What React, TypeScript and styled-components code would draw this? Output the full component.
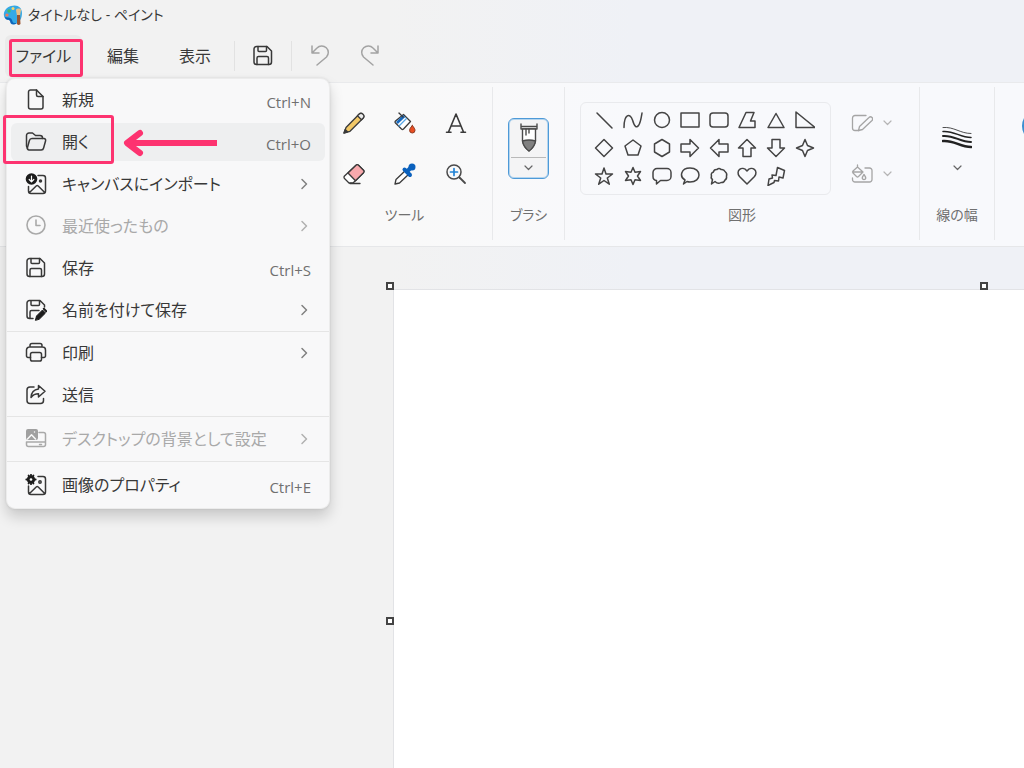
import React from 'react';
import styled, { createGlobalStyle } from 'styled-components';

const pink = '#fd3370';

const GlobalStyle = createGlobalStyle`
  * { box-sizing: border-box; }
  body {
    margin: 0;
    overflow: hidden;
    font-family: "Open Sans", "Noto Sans CJK JP", sans-serif;
    font-feature-settings: "palt";
    color: #383838;
  }
  button {
    font: inherit;
    font-feature-settings: inherit;
    color: inherit;
    border: 0;
    padding: 0;
    background: none;
  }
`;

const Window = styled.div`
  height: 100vh;
  display: flex;
  flex-direction: column;
  background: linear-gradient(90deg, #f2f2f2 38%, #eff1f6 62%);
`;

const TitleBar = styled.header`
  flex: none;
  height: 30px;
  display: flex;
  align-items: center;
  gap: 5px;
  padding-left: 3px;
`;

const Title = styled.h1`
  margin: 0;
  font-size: 14px;
  font-weight: 400;
  line-height: 20px;
`;

const MenuBar = styled.nav`
  flex: none;
  height: 52px;
  display: flex;
  align-items: center;
  padding: 0 5px;
`;

const FileMenu = styled.div`
  position: relative;
  margin-right: 5px;
`;

const MenuButton = styled.button<{ $active?: boolean }>`
  width: ${p => (p.$active ? 77 : 72)}px;
  height: 42px;
  border-radius: 6px;
  font-size: 16px;
  line-height: 24px;
  background: ${p => (p.$active ? '#eaeaea' : 'transparent')};
`;

const BarDivider = styled.span`
  width: 1px;
  height: 30px;
  margin: 0 3px;
  background: #e2e2e2;
`;

const BarIcon = styled.button`
  width: 50px;
  height: 40px;
  display: grid;
  place-items: center;
`;

const Callout = styled.span<{ $x: number; $y: number; $w: number; $h: number }>`
  position: absolute;
  left: ${p => p.$x}px;
  top: ${p => p.$y}px;
  width: ${p => p.$w}px;
  height: ${p => p.$h}px;
  border: 3px solid ${pink};
  border-radius: 3px;
  pointer-events: none;
`;

const Arrow = styled.svg`
  position: absolute;
  left: 112px;
  top: 6px;
`;

const Dropdown = styled.div`
  position: absolute;
  z-index: 2;
  left: 1px;
  top: 43px;
  width: 324px;
  border: 1px solid #ececec;
  border-radius: 9px;
  background: #f8f8f9;
  box-shadow: 0 8px 14px rgba(0, 0, 0, 0.17), 0 0 3px rgba(0, 0, 0, 0.1);
`;

const Section = styled.div<{ $pad?: number }>`
  display: flex;
  flex-direction: column;
  padding: ${p => p.$pad ?? 0}px 4px;
  & + & { border-top: 1px solid #e5e5e5; }
`;

const Item = styled.button<{ $hover?: boolean }>`
  position: relative;
  height: 38px;
  margin: 2px 0;
  padding: 0 14px;
  display: flex;
  align-items: center;
  gap: 15px;
  border-radius: 6px;
  font-size: 16px;
  line-height: 24px;
  text-align: left;
  background: ${p => (p.$hover ? '#eeeff0' : 'transparent')};
  &:disabled { color: #a9a9a9; }
`;

const ItemLabel = styled.span`
  flex: 1;
  white-space: nowrap;
`;

const Shortcut = styled.span`
  font-size: 15px;
  line-height: 20px;
  padding-top: 4px;
  color: #707070;
`;

const Ribbon = styled.section`
  flex: none;
  height: 165px;
  display: flex;
  padding: 4px 0 6px 317px;
  border-top: 1px solid #e9eaec;
  border-bottom: 1px solid #e6e7e9;
  background: linear-gradient(90deg, #f9f9f9 40%, #f8f9fc 62%);
`;

const Group = styled.div<{ $w?: number }>`
  flex: ${p => (p.$w ? 'none' : '1')};
  width: ${p => (p.$w ? p.$w + 'px' : 'auto')};
  display: flex;
  flex-direction: column;
  align-items: center;
  overflow: hidden;
  & + & { border-left: 1px solid #e8e9eb; }
`;

const GroupBody = styled.div`
  height: 118px;
  width: 100%;
  display: flex;
  align-items: center;
  justify-content: center;
  padding-top: 4px;
`;

const GroupLabel = styled.span`
  font-size: 14px;
  line-height: 20px;
  color: #707070;
`;

const ToolGrid = styled.div`
  display: grid;
  grid-template-columns: repeat(3, 51px);
  grid-auto-rows: 51px;
`;

const Tool = styled.button`
  display: grid;
  place-items: center;
`;

const BrushButton = styled.button`
  width: 41px;
  height: 61px;
  display: flex;
  flex-direction: column;
  align-items: center;
  border: 1px solid #4d9ad8;
  border-radius: 6px;
  background: #f4f4f5;
  box-shadow: inset 0 0 0 1px #b5d5ee;
`;

const BrushTop = styled.span`
  height: 39px;
  width: 35px;
  display: grid;
  place-items: center;
  border-bottom: 1px solid #b9b9b9;
`;

const BrushBottom = styled.span`
  flex: 1;
  display: grid;
  place-items: center;
`;

const ShapesBody = styled(GroupBody)`
  justify-content: flex-start;
  padding-left: 15px;
`;

const ShapePanel = styled.div`
  width: 251px;
  height: 93px;
  padding: 3px 11px 3px 9px;
  display: grid;
  grid-template-columns: repeat(8, 1fr);
  grid-auto-rows: 28px;
  border: 1px solid #e9eaed;
  border-radius: 6px;
`;

const StyleColumn = styled.div`
  display: flex;
  flex-direction: column;
  margin-left: 11px;
`;

const StyleButton = styled.button`
  width: 58px;
  height: 51px;
  display: flex;
  align-items: center;
  justify-content: center;
  gap: 10px;
`;

const StrokeButton = styled.button`
  display: flex;
  flex-direction: column;
  align-items: center;
  gap: 16px;
`;

const ColorBody = styled(GroupBody)`
  justify-content: flex-start;
  align-items: flex-start;
  padding: 22px 0 0 27px;
`;

const ColorSwatch = styled.button`
  flex: none;
  width: 34px;
  height: 34px;
  border: 2px solid #3c8fd0;
  border-radius: 50%;
  background: #3c8fd0;
`;

const Workspace = styled.main`
  flex: 1;
  min-height: 0;
  overflow: hidden;
  padding: 42px 0 0 393px;
`;

const Canvas = styled.div`
  position: relative;
  width: 1190px;
  height: 672px;
  border: 1px solid #e2e3e6;
  background: #fff;
`;

const Handle = styled.span<{ $x: string; $y: string }>`
  position: absolute;
  left: ${p => p.$x};
  top: ${p => p.$y};
  width: 8px;
  height: 8px;
  margin: -8px 0 0 -8px;
  border: 2px solid #444;
  background: #fff;
`;

type GlyphProps = { w?: number; h?: number; sw?: number; color?: string; children: React.ReactNode };
const Glyph = ({ w = 22, h = 22, sw = 1.5, color = 'currentColor', children }: GlyphProps) => (
  <svg width={w} height={h} viewBox={`0 0 ${w} ${h}`} fill="none" stroke={color} strokeWidth={sw} strokeLinecap="round" strokeLinejoin="round" aria-hidden="true">
    {children}
  </svg>
);

const ChevronRight = ({ color = '#808080' }: { color?: string }) => <Glyph w={14} h={14} sw={1.5} color={color}><path d="M5 2.500 9.500 7 5 11.500" /></Glyph>;
const ChevronDown = ({ color = '#666' }: { color?: string }) => <Glyph w={9} h={6} sw={1.2} color={color}><path d="M1 1 4.500 4.500 8 1" /></Glyph>;

const SaveGlyph = () => (
  <Glyph>
    <path d="M4.500 1.500H15L19.500 6v11a2.500 2.500 0 0 1-2.500 2.500H4.500A2.500 2.500 0 0 1 2 17V4a2.500 2.500 0 0 1 2.500-2.500Z" />
    <path d="M6 1.500v4a1 1 0 0 0 1 1h6.500a1 1 0 0 0 1-1v-4M5 19.500V13a1.500 1.500 0 0 1 1.500-1.500H15a1.500 1.500 0 0 1 1.500 1.500v6.500" />
  </Glyph>
);
const NewGlyph = () => (
  <Glyph>
    <path d="M5.500 1h6L18 7.500V18a2 2 0 0 1-2 2H5.500a2 2 0 0 1-2-2V3a2 2 0 0 1 2-2Z" />
    <path d="M11.500 1v5a1.500 1.500 0 0 0 1.500 1.500h5" />
  </Glyph>
);
const OpenGlyph = () => (
  <Glyph>
    <path d="M2.500 17.500 1.500 15V4.500A2.500 2.500 0 0 1 4 2h3.500l3 2.500H15A2.500 2.500 0 0 1 17.500 7v.5" />
    <path d="M7 7.500h12a1.700 1.700 0 0 1 1.600 2.200l-2 7.300A2.500 2.500 0 0 1 16.200 19H4a1.700 1.700 0 0 1-1.600-2.200l2-7.300A2.700 2.700 0 0 1 7 7.500Z" />
  </Glyph>
);
const ImportGlyph = () => (
  <Glyph>
    <path d="M13 2.500h5A2.500 2.500 0 0 1 20.500 5v13a2.500 2.500 0 0 1-2.500 2.500H6A2.500 2.500 0 0 1 3.500 18v-4.500M4.500 19.500l6.700-6.500a1.500 1.500 0 0 1 2 0l6.500 6.500" />
    <circle cx="15.500" cy="8" r="1" fill="currentColor" />
    <circle cx="6.500" cy="6" r="5.800" fill="#1c1c1c" stroke="none" />
    <path d="M6.500 3v5.500M4.200 6.500l2.300 2.300 2.300-2.300" stroke="#fff" strokeWidth="1.200" />
  </Glyph>
);
const ClockGlyph = () => <Glyph sw={1.6}><circle cx="11" cy="10" r="9" /><path d="M11 5v5.500h4" /></Glyph>;
const SaveAsGlyph = () => (
  <Glyph>
    <path d="M8 19.500H4.500A2.500 2.500 0 0 1 2 17V4a2.500 2.500 0 0 1 2.500-2.500H15L19.500 6v2M6 1.500v4a1 1 0 0 0 1 1h6.500a1 1 0 0 0 1-1v-4M5 19.500V13a1.500 1.500 0 0 1 1.500-1.500H14" />
    <path d="m10.500 21 1-4 6-6 3 3-6 6Z" fill="#1c1c1c" stroke="#1c1c1c" strokeWidth="1" />
    <path d="m18.800 9.700 2.500 2.500" stroke="#1c1c1c" strokeWidth="2" />
  </Glyph>
);
const PrintGlyph = () => (
  <Glyph>
    <path d="M5 5V3.500a2 2 0 0 1 2-2h8a2 2 0 0 1 2 2V5M5.500 15.500H3A1.500 1.500 0 0 1 1.500 14V8a3 3 0 0 1 3-3h13a3 3 0 0 1 3 3v6a1.500 1.500 0 0 1-1.500 1.500h-2.500" />
    <rect x="5.500" y="10.500" width="11" height="8.500" rx="1.800" />
  </Glyph>
);
const ShareGlyph = () => (
  <Glyph>
    <path d="M9 3H5a3 3 0 0 0-3 3v10.500a3 3 0 0 0 3 3h10.500a3 3 0 0 0 3-3v-2" />
    <path d="M13.500 1.500 20 7.300 13.500 13V9.700C10 9.700 8 10.700 6 13.500c.3-5 3-8 7.500-8.500V1.500Z" />
  </Glyph>
);
const DesktopGlyph = () => (
  <Glyph>
    <path d="M14 4.500h4.500a2 2 0 0 1 2 2v10a2 2 0 0 1-2 2h-15a2 2 0 0 1-2-2V14M1.500 14h19M14.500 16.500h2" />
    <rect x="1" y="1" width="12" height="11" rx="2" fill="#a0a0a0" stroke="none" />
    <path d="m2.500 11 4-4.300 4 4.300M9.500 4v.1" stroke="#f8f8f8" />
  </Glyph>
);
const PropertiesGlyph = () => (
  <Glyph>
    <path d="M13 2.500h5A2.500 2.500 0 0 1 20.500 5v13a2.500 2.500 0 0 1-2.500 2.500H6A2.500 2.500 0 0 1 3.500 18v-6M4.500 19.500l6.700-6.500a1.500 1.500 0 0 1 2 0l6.500 6.500" />
    <circle cx="15" cy="8" r="1.200" />
    <circle cx="6" cy="5.500" r="2.800" strokeWidth="2.500" stroke="#1c1c1c" />
    <path d="M6 .8v9.400M1.300 5.500h9.400M3.600 1.500l4.800 8M8.400 1.500l-4.800 8" stroke="#1c1c1c" strokeWidth="1.800" />
    <circle cx="6" cy="5.500" r="1.300" fill="#fff" stroke="none" />
  </Glyph>
);

type Entry = { label: string; icon: React.ReactNode; keys?: string; sub?: boolean; disabled?: boolean; open?: boolean };
const sections: { pad?: number; items: Entry[] }[] = [
  {
    items: [
      { label: '新規', icon: <NewGlyph />, keys: 'Ctrl+N' },
      { label: '開く', icon: <OpenGlyph />, keys: 'Ctrl+O', open: true },
      { label: 'キャンバスにインポート', icon: <ImportGlyph />, sub: true },
      { label: '最近使ったもの', icon: <ClockGlyph />, sub: true, disabled: true },
      { label: '保存', icon: <SaveGlyph />, keys: 'Ctrl+S' },
      { label: '名前を付けて保存', icon: <SaveAsGlyph />, sub: true },
    ],
  },
  { items: [{ label: '印刷', icon: <PrintGlyph />, sub: true }, { label: '送信', icon: <ShareGlyph /> }] },
  { pad: 1, items: [{ label: 'デスクトップの背景として設定', icon: <DesktopGlyph />, sub: true, disabled: true }] },
  { pad: 2, items: [{ label: '画像のプロパティ', icon: <PropertiesGlyph />, keys: 'Ctrl+E' }] },
];

const tools: [string, React.ReactNode][] = [
  ['鉛筆', <Glyph sw={1.3} color="#3a3a3a"><path d="M1 21 3 15.500 15.800 2.500a2.800 2.800 0 0 1 4 4L7 19.300Z" fill="#f2c867" /><path d="m14.500 3.800 1.500-1.500a2.600 2.600 0 0 1 4 4l-1.500 1.500Z" fill="#eee" /><path d="m1 21 1.200-3.500 2.300 2.300Z" fill="#3a3a3a" /></Glyph>],
  ['塗りつぶし', <Glyph sw={1.3} color="#3a3a3a"><path d="M9.500 2.500 16.500 9.500 9.500 17a1.500 1.500 0 0 1-2 0L1.500 11a1.500 1.500 0 0 1 0-2Z" fill="#fff" /><path d="m9 3-7 7 1.800 2 7.500-7Z" fill="#1769bd" stroke="none" /><path d="m12.500 6.500-7.500 7.500" stroke="#56a5e6" /><path d="m5 1 4 4" /><path d="M18.300 13.500c2 2.500 2.700 3.500 2.700 4.800a2.700 2.700 0 0 1-5.400 0c0-1.300.7-2.300 2.700-4.800Z" fill="#e94e22" stroke="#8c3b22" strokeWidth="1" /></Glyph>],
  ['テキスト', <Glyph sw={1.6} color="#3a3a3a"><path d="M3.500 20 11 2l7.500 18M6 14h10M1.500 20.300H6M16 20.300h4.500" /></Glyph>],
  ['消しゴム', <Glyph sw={1.3} color="#3a3a3a"><path d="M13 2.200a2 2 0 0 1 2.500 0l5 5a2 2 0 0 1 0 2.500L10 20H6l-4.500-4.500a2 2 0 0 1 0-2.500Z" fill="#fff" /><path d="M13 2.200a2 2 0 0 1 2.500 0l5 5a2 2 0 0 1 0 2.500l-8 8L5 10Z" fill="#f8a9ad" /><path d="M7 20.500h10" /></Glyph>],
  ['色の選択', <Glyph sw={1.3} color="#3a3a3a"><path d="m1 21 1-4.500L12 7l3.500 3.500-10 9.500Z" fill="#fff" /><path d="m10.500 6.500 5.500 5.500" stroke="#0b61bd" strokeWidth="4" /><path d="m13.500 8 4.500-4.500" stroke="#0b61bd" strokeWidth="4" /><circle cx="18" cy="4" r="3.500" fill="#0b61bd" stroke="none" /></Glyph>],
  ['拡大鏡', <Glyph sw={1.5} color="#4a4a4a"><circle cx="9" cy="9" r="7" /><path d="m14.500 14.500 5.500 5.500" strokeWidth="1.800" /><path d="M9 5.500v7M5.500 9h7" stroke="#2183d5" strokeWidth="1.700" /></Glyph>],
];

const shapes: [string, string][] = [
  ['直線', 'M3 3 18 18'],
  ['曲線', 'M1 17.500C1 4 7 2.500 9.500 10c2 7 4 8 6 5.500S18 9 19 3'],
  ['楕円形', 'M10 2.500a7.500 7.500 0 1 1 0 15 7.500 7.500 0 1 1 0-15Z'],
  ['四角形', 'M1 3h18v14H1Z'],
  ['角丸四角形', 'M4 3h12a3 3 0 0 1 3 3v8a3 3 0 0 1-3 3H4a3 3 0 0 1-3-3V6a3 3 0 0 1 3-3Z'],
  ['多角形', 'M9 2.500h8L13.500 11H18v6.500H2Z'],
  ['三角形', 'M10 3.500 18 17.500H2Z'],
  ['直角三角形', 'M1 2v15.500h19Z'],
  ['ひし形', 'M10 1.500 18.500 10 10 18.500 1.500 10Z'],
  ['五角形', 'M10 2 18 8l-3 9H5L2 8Z'],
  ['六角形', 'M10 1.500 17.500 6v8L10 18.500 2.500 14V6Z'],
  ['右矢印', 'M1 6h9V1.500L18.500 10 10 18.500V14H1Z'],
  ['左矢印', 'M19 6h-9V1.500L1.500 10l8.500 8.500V14h9Z'],
  ['上矢印', 'M6 18.500V10H1.500L10 1.500 18.500 10H14v8.500Z'],
  ['下矢印', 'M6 1.500V10H1.500l8.500 8.500 8.500-8.500H14V1.500Z'],
  ['四つ星', 'm10 1.500 2.500 6 6 2.500-6 2.500-2.500 6-2.500-6-6-2.500 6-2.500Z'],
  ['五つ星', 'm10 2 2 6h6.500l-5.200 4 2 6.200L10 14.500l-5.300 3.700 2-6.200-5.200-4H8Z'],
  ['六つ星', 'm10 1.500 2 4.700 5.500-.7L14.500 10l3 4.500-5.500-.7-2 4.700-2-4.700-5.500.7 3-4.500-3-4.500 5.500.7Z'],
  ['角丸吹き出し', 'M5 2.500h10a4 4 0 0 1 4 4v4a4 4 0 0 1-4 4H8.500L4.500 18v-3.500A4 4 0 0 1 1 10.500v-4a4 4 0 0 1 4-4Z'],
  ['円形吹き出し', 'M5 14C-1 10.500 1 2 10 2c12 0 12 14 0 14q-1.500 0-3-.5L3.500 18Z'],
  ['雲形吹き出し', 'M6 15.500 2.500 18l1-4.500Q1.500 12 2.500 10q-1-3 2-4Q5 3 8 3.500q2-2 4 0 3-.5 4 2 2.500 2 1.500 4.500.5 3-1.500 4-1 3-4 2.500-3 2-6-1Z'],
  ['ハート', 'M10 18 2.500 10.500C-2 5 5-1 10 5c5-6 12 0 7.500 5.500Z'],
  ['稲妻', 'M11.500 1.500 18.500 4.500 17 12l-4-1-.5 4-4-.5L8 16.500 2 19.500 3 13l3.500-1L6 9l4 .5Z'],
];

export default function App() {
  return (
    <>
      <GlobalStyle />
      <Window>
        <TitleBar>
          <svg width="20" height="22" viewBox="0 0 20 22" aria-hidden="true">
            <path d="M8 2c6-2 11 1 11 7 0 5-2 10-8 11-3 0-3-2-3-4-1-2-7 0-7-4C0 7 4 3 8 2Z" fill="#35a9e6" />
            <path d="M2 13c3 1 6 0 7 3s1 3 5 3c-4 3-7 1-7-2-1-2-5 0-5-4Z" fill="#0d66ba" />
            <circle cx="6" cy="7" r="1.700" fill="#48bd63" /><circle cx="10" cy="4.500" r="1.500" fill="#f5d66b" /><circle cx="4" cy="11" r="1.600" fill="#f27b58" />
            <path d="M13 6c0-2 5-2 5 0l-1 6h-3Z" fill="#e9bf87" /><path d="M14 11h3l.5 9q-2 2-3.500 0Z" fill="#9a5430" />
          </svg>
          <Title>タイトルなし - ペイント</Title>
        </TitleBar>
        <MenuBar>
          <FileMenu>
            <MenuButton $active aria-expanded="true">ファイル</MenuButton>
            <Callout $x={4} $y={4} $w={74} $h={38} />
            <Dropdown>
              {sections.map((s, i) => (
                <Section key={i} $pad={s.pad}>
                  {s.items.map(it => (
                    <Item key={it.label} disabled={it.disabled} $hover={it.open}>
                      {it.icon}
                      <ItemLabel>{it.label}</ItemLabel>
                      {it.keys && <Shortcut>{it.keys}</Shortcut>}
                      {it.sub && <ChevronRight color={it.disabled ? '#b0b0b0' : undefined} />}
                      {it.open && (
                        <>
                          <Callout $x={-8} $y={-8} $w={111} $h={49} />
                          <Arrow width="94" height="28" viewBox="0 0 94 28" fill="none" stroke={pink} strokeWidth="6" strokeLinejoin="round" aria-hidden="true">
                            <path d="M4 14h90" />
                            <path d="M17 4 4 14l13 10" strokeLinecap="round" />
                          </Arrow>
                        </>
                      )}
                    </Item>
                  ))}
                </Section>
              ))}
            </Dropdown>
          </FileMenu>
          <MenuButton>編集</MenuButton>
          <MenuButton>表示</MenuButton>
          <BarDivider />
          <BarIcon aria-label="保存"><SaveGlyph /></BarIcon>
          <BarDivider />
          <BarIcon aria-label="元に戻す"><Glyph w={20} color="#a3a3a3"><path d="M2 1v7h7M2 8l5-5a6.500 6.500 0 0 1 9.500 9L7 20" /></Glyph></BarIcon>
          <BarIcon aria-label="やり直し"><Glyph w={20} color="#a3a3a3"><path d="M18 1v7h-7M18 8l-5-5a6.500 6.500 0 0 0-9.500 9L13 20" /></Glyph></BarIcon>
        </MenuBar>
        <Ribbon>
          <Group $w={175}>
            <GroupBody>
              <ToolGrid>
                {tools.map(([name, icon]) => <Tool key={name} aria-label={name}>{icon}</Tool>)}
              </ToolGrid>
            </GroupBody>
            <GroupLabel>ツール</GroupLabel>
          </Group>
          <Group $w={72}>
            <GroupBody>
              <BrushButton aria-label="ブラシ">
                <BrushTop>
                  <Glyph w={18} h={30} sw={1.4} color="#4a4a4a">
                    <path d="M1 1v5h16V1M1 3.500h16" /><path d="M2.500 6h13v12q-1 6-6.500 10-5.500-4-6.500-10Z" fill="#fff" />
                    <path d="M2.500 18q6.500-2 13 0-1 6-6.500 10-5.500-4-6.500-10Z" fill="#808080" /><path d="M6 6v6M9 6v4" />
                  </Glyph>
                </BrushTop>
                <BrushBottom><ChevronDown /></BrushBottom>
              </BrushButton>
            </GroupBody>
            <GroupLabel>ブラシ</GroupLabel>
          </Group>
          <Group $w={355}>
            <ShapesBody>
              <ShapePanel>
                {shapes.map(([name, d]) => (
                  <Tool key={name} aria-label={name}><Glyph w={20} h={20} sw={1.5} color="#444"><path d={d} /></Glyph></Tool>
                ))}
              </ShapePanel>
              <StyleColumn>
                <StyleButton aria-label="輪郭">
                  <Glyph color="#a5a5a5" sw={1.3}><path d="M15 3.500H4A2.500 2.500 0 0 0 1.500 6v10A2.500 2.500 0 0 0 4 18.500h4" /><path d="m7.500 18.500 1-4 9.500-9a2 2 0 0 1 3 3l-9.500 9Z" /></Glyph>
                  <ChevronDown color="#b5b5b5" />
                </StyleButton>
                <StyleButton aria-label="図形の塗りつぶし">
                  <Glyph color="#a5a5a5" sw={1.3}><path d="M14 5h4.500A2.500 2.500 0 0 1 21 7.500v9a2.500 2.500 0 0 1-2.500 2.500H4a2.500 2.500 0 0 1-2.500-2.500V15" /><path d="m6.500 4 5.500 5-4.500 4.500a1.500 1.500 0 0 1-2 0L2 10a1.500 1.500 0 0 1 0-2ZM6.500 2v2M1.500 9H12" /><path d="M13 11.500c3 4 1.500 5 0 5s-3-1 0-5Z" /></Glyph>
                  <ChevronDown color="#b5b5b5" />
                </StyleButton>
              </StyleColumn>
            </ShapesBody>
            <GroupLabel>図形</GroupLabel>
          </Group>
          <Group $w={75}>
            <GroupBody>
              <StrokeButton aria-label="線の幅">
                <Glyph w={30} h={24} color="#222">
                  <path d="M1 2.500c11-1 17 6 28 6" strokeWidth=".8" />
                  <path d="M1 6.500c11-1 17 6 28 6" strokeWidth="1.500" />
                  <path d="M1 11c11-1 17 6 28 6" strokeWidth="2" />
                  <path d="M1 16c11-1 17 6 28 6" strokeWidth="2.600" />
                </Glyph>
                <ChevronDown />
              </StrokeButton>
            </GroupBody>
            <GroupLabel>線の幅</GroupLabel>
          </Group>
          <Group>
            <ColorBody><ColorSwatch aria-label="色 1" /></ColorBody>
          </Group>
        </Ribbon>
        <Workspace>
          <Canvas>
            <Handle $x="0" $y="0" />
            <Handle $x="50%" $y="0" />
            <Handle $x="0" $y="50%" />
          </Canvas>
        </Workspace>
      </Window>
    </>
  );
}
